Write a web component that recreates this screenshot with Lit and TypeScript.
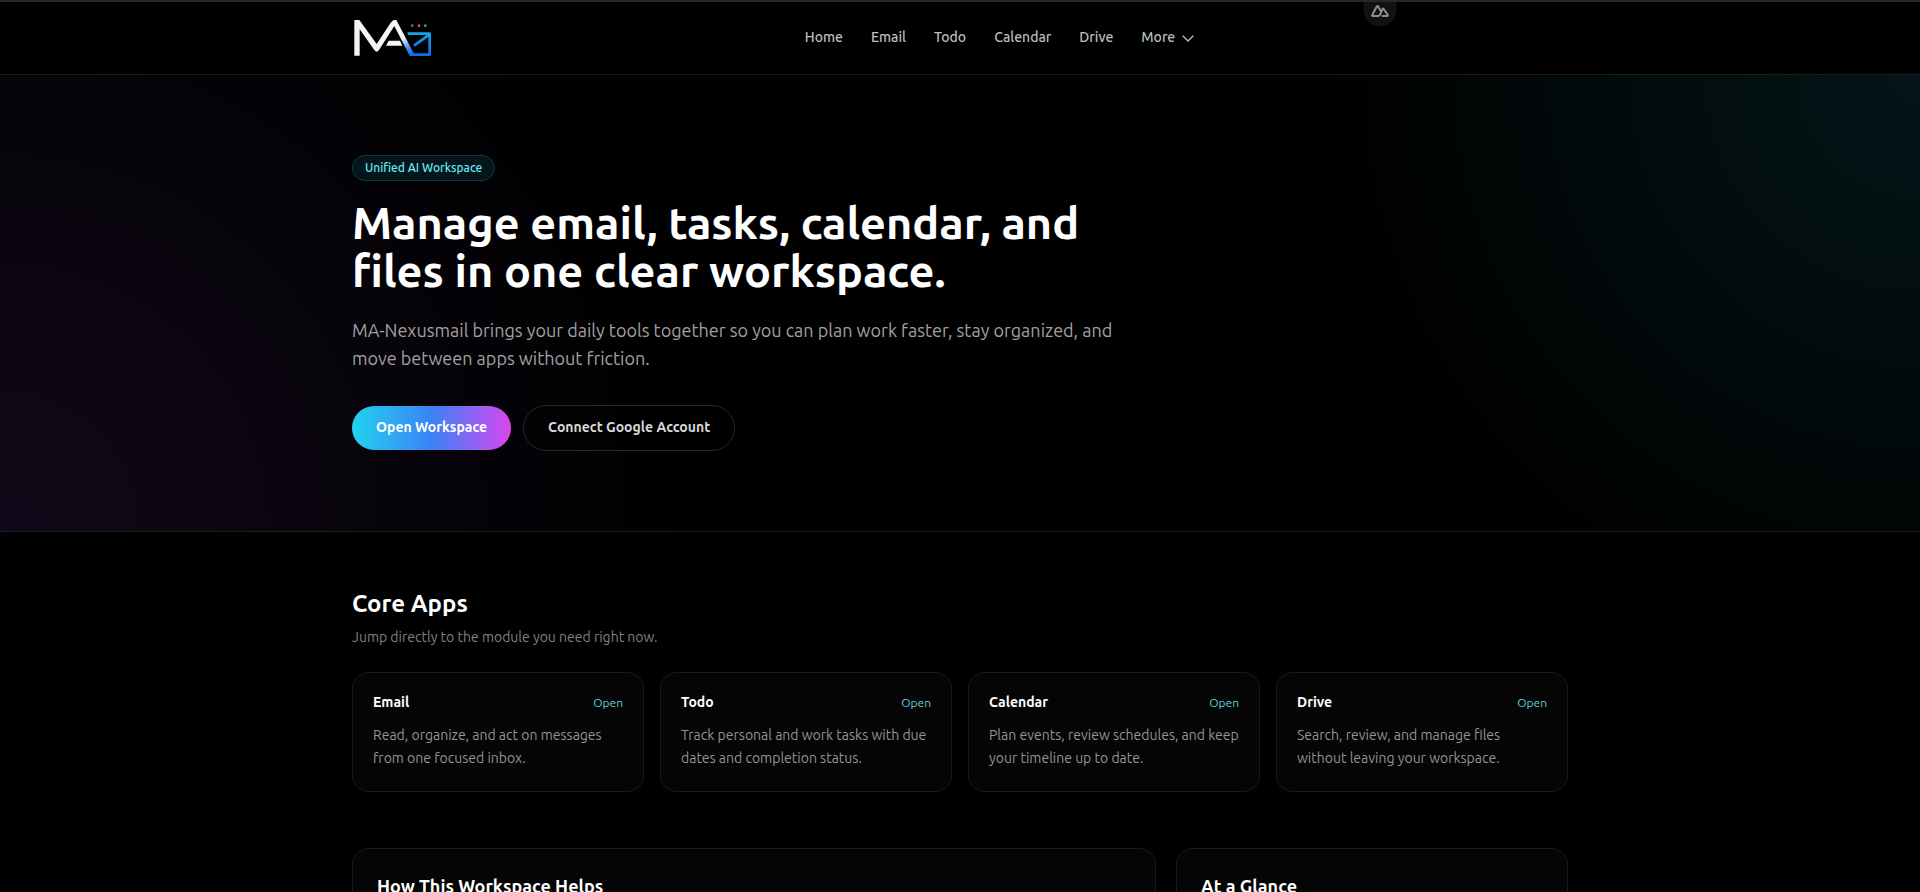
import { LitElement, html, css } from "lit";
import { customElement } from "lit/decorators.js";

const NAV = ["Home", "Email", "Todo", "Calendar", "Drive"];

const APPS = [
  { name: "Email", text: "Read, organize, and act on messages from one focused inbox." },
  { name: "Todo", text: "Track personal and work tasks with due dates and completion status." },
  { name: "Calendar", text: "Plan events, review schedules, and keep your timeline up to date." },
  { name: "Drive", text: "Search, review, and manage files without leaving your workspace." },
];

@customElement("site-header")
export class SiteHeader extends LitElement {
  static styles = css`
    :host {
      display: block;
      background: #000;
      border-bottom: 1px solid #1c1c1c;
    }
    .bar {
      display: flex;
      align-items: center;
      justify-content: space-between;
      box-sizing: border-box;
      max-width: 1280px;
      height: 74px;
      margin: 0 auto;
      padding: 0 32px;
    }
    .logo {
      display: block;
    }
    .logo svg {
      display: block;
      width: 80px;
      height: 46px;
    }
    nav {
      display: flex;
      align-items: center;
      gap: 28px;
    }
    nav a,
    nav button {
      font: 500 14px/20px Ubuntu, "Noto Sans", sans-serif;
      color: #bdbdbd;
      text-decoration: none;
    }
    nav button {
      display: flex;
      align-items: center;
      gap: 6px;
      padding: 0;
      border: 0;
      background: none;
      cursor: pointer;
    }
    .chevron {
      width: 14px;
      height: 14px;
    }
  `;

  render() {
    return html`
      <div class="bar">
        <a class="logo" href="#" aria-label="Home page">
          <svg viewBox="36 42 240 138" fill="none" aria-hidden="true">
            <defs>
              <linearGradient id="leg" gradientUnits="userSpaceOnUse" x1="185" y1="100" x2="214" y2="160">
                <stop offset="0.2" stop-color="#f4f5f8" />
                <stop offset="0.75" stop-color="#3f86f5" />
                <stop offset="1" stop-color="#1473f0" />
              </linearGradient>
              <linearGradient id="mail" gradientUnits="userSpaceOnUse" x1="230" y1="98" x2="230" y2="168">
                <stop offset="0" stop-color="#12a5e8" />
                <stop offset="1" stop-color="#1268ea" />
              </linearGradient>
            </defs>
            <path
              d="M43 167V60h15l52 72 42-64q6-8 11-8h6l56 107h-16L163 78l-46 72q-7 10-14 0L59 88v79z"
              fill="url(#leg)"
            />
            <path d="M146 122h34l7 15h-49z" fill="#f4f5f8" />
            <path d="M203 101h66v63h-57M269 103l-47 34" stroke="url(#mail)" stroke-width="8" stroke-linejoin="round" />
            <circle cx="217" cy="77" r="4" fill="#3b78d0" />
            <circle cx="237" cy="77" r="4" fill="#f04a50" />
            <circle cx="256" cy="77" r="4" fill="#22b866" />
          </svg>
        </a>
        <nav aria-label="Main">
          ${NAV.map((n) => html`<a href="#">${n}</a>`)}
          <button type="button" aria-haspopup="true">
            More
            <svg class="chevron" viewBox="0 0 14 14" fill="none" stroke="currentColor" stroke-width="1.4"
              stroke-linecap="round" stroke-linejoin="round" aria-hidden="true">
              <path d="M2 6l5 5 5-5" />
            </svg>
          </button>
        </nav>
        <span></span>
      </div>
    `;
  }
}

@customElement("app-card")
export class AppCard extends LitElement {
  static properties = { name: {}, text: {} };
  declare name: string;
  declare text: string;

  static styles = css`
    :host {
      display: block;
    }
    .card {
      display: flex;
      flex-direction: column;
      gap: 12px;
      box-sizing: border-box;
      height: 100%;
      padding: 19px 20px 21px;
      border: 1px solid #1b1b1b;
      border-radius: 16px;
      background: #050505;
      text-decoration: none;
    }
    .head {
      display: flex;
      align-items: center;
      justify-content: space-between;
    }
    h3 {
      margin: 0;
      font-size: 14px;
      line-height: 20px;
      font-weight: 600;
      color: #fff;
    }
    .open {
      font-size: 12px;
      line-height: 16px;
      padding-top: 2px;
      color: #61cbd9;
    }
    p {
      margin: 0;
      font-size: 14px;
      line-height: 23px;
      color: #949494;
    }
  `;

  render() {
    return html`
      <a class="card" href="#">
        <div class="head">
          <h3>${this.name}</h3>
          <span class="open">Open</span>
        </div>
        <p>${this.text}</p>
      </a>
    `;
  }
}

@customElement("app-root")
export class AppRoot extends LitElement {
  static styles = css`
    :host {
      display: block;
      position: relative;
      min-height: 100vh;
      background: #000;
      color: #fff;
      font-family: Ubuntu, "Noto Sans", sans-serif;
    }
    .edge {
      position: absolute;
      top: 0;
      left: 0;
      right: 0;
      height: 2px;
      background: #272727;
    }
    .devtools {
      position: absolute;
      top: 0;
      left: 72%;
      display: flex;
      justify-content: center;
      width: 32px;
      height: 26px;
      margin-left: -18px;
      padding: 2px 0 0;
      box-sizing: border-box;
      border: 1px solid #1a1a1a;
      border-top: 2px solid #272727;
      border-radius: 0 0 16px 16px;
      background: #111;
      color: #8f8f8f;
      cursor: pointer;
    }
    .devtools svg {
      width: 20px;
      height: 14px;
    }
    .wrap {
      box-sizing: border-box;
      max-width: 1280px;
      margin: 0 auto;
      padding: 0 32px;
    }
    .hero {
      padding: 80px 0;
      border-bottom: 1px solid #1c1c1c;
      background: radial-gradient(circle at top right, rgba(34, 211, 238, 0.1), transparent 30%),
        radial-gradient(circle at bottom left, rgba(168, 85, 247, 0.1), transparent 35%);
    }
    .badge {
      display: block;
      width: fit-content;
      padding: 4px 12px;
      border: 1px solid #12383f;
      border-radius: 13px;
      background: #04161a;
      font-size: 12px;
      line-height: 16px;
      font-weight: 500;
      color: #67e8f9;
    }
    h1 {
      max-width: 768px;
      margin: 18px 0 0;
      font-size: 45px;
      line-height: 48px;
      font-weight: 600;
    }
    .lead {
      max-width: 768px;
      margin: 21px 0 0;
      font-size: 18px;
      line-height: 28px;
      color: #a1a1a1;
    }
    .actions {
      display: flex;
      flex-wrap: wrap;
      align-items: center;
      gap: 12px;
      margin-top: 33px;
    }
    .btn {
      padding: 11px 24px 13px;
      border-radius: 23px;
      font-size: 14px;
      line-height: 20px;
      font-weight: 600;
      text-decoration: none;
      color: #d8d8d8;
    }
    .primary {
      background: linear-gradient(90deg, #22d3ee, #3b82f6, #d946ef);
      color: #fff;
    }
    .outline {
      border: 1px solid #272727;
    }
    .core {
      padding-top: 56px;
    }
    h2 {
      margin: 0;
      font-weight: 600;
    }
    .core h2 {
      font-size: 24px;
      line-height: 32px;
    }
    .sub {
      margin: 7px 0 25px;
      font-size: 14px;
      line-height: 20px;
      color: #808080;
    }
    .cards {
      display: grid;
      grid-template-columns: repeat(4, 1fr);
      gap: 16px;
    }
    .panels {
      display: grid;
      grid-template-columns: repeat(3, 1fr);
      gap: 20px;
      padding: 56px 0;
    }
    .panel {
      padding: 23px 24px;
      border: 1px solid #1b1b1b;
      border-radius: 16px;
      background: #050505;
    }
    .panel h2 {
      font-size: 18px;
      line-height: 28px;
    }
    .wide {
      grid-column: span 2;
    }
    @media (max-width: 1000px) {
      .cards {
        grid-template-columns: repeat(2, 1fr);
      }
    }
  `;

  render() {
    return html`
      <site-header></site-header>
      <div class="edge"></div>
      <button class="devtools" type="button" aria-label="Toggle devtools">
        <svg viewBox="0 0 20 14" fill="none" stroke="currentColor" stroke-width="2" stroke-linejoin="round"
          stroke-linecap="round" aria-hidden="true">
          <path d="M8 12H2.800Q1.600 12 2.300 10.800L6.800 2.600Q7.500 1.500 8.200 2.600L10.400 6.600" />
          <path d="M8 12Q9.300 12 10 10.800L12.500 5.200Q13.200 4 13.900 5.200L17.700 10.800Q18.200 12 17 12H12.500" />
        </svg>
      </button>
      <main>
        <section class="hero">
          <div class="wrap">
            <span class="badge">Unified AI Workspace</span>
            <h1>Manage email, tasks, calendar, and files in one clear workspace.</h1>
            <p class="lead">
              MA-Nexusmail brings your daily tools together so you can plan work faster, stay organized, and move
              between apps without friction.
            </p>
            <div class="actions">
              <a class="btn primary" href="#">Open Workspace</a>
              <a class="btn outline" href="#">Connect Google Account</a>
            </div>
          </div>
        </section>
        <div class="wrap">
          <section class="core">
            <h2>Core Apps</h2>
            <p class="sub">Jump directly to the module you need right now.</p>
            <div class="cards">
              ${APPS.map((a) => html`<app-card .name=${a.name} .text=${a.text}></app-card>`)}
            </div>
          </section>
          <div class="panels">
            <section class="panel wide"><h2>How This Workspace Helps</h2></section>
            <section class="panel"><h2>At a Glance</h2></section>
          </div>
        </div>
      </main>
    `;
  }
}
